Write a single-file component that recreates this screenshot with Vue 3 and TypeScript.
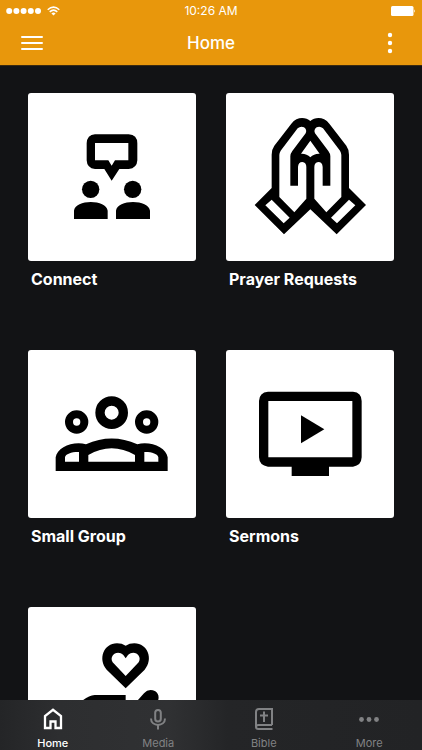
<script setup lang="ts">
import { ref } from 'vue'

type IconName = 'connect' | 'prayer' | 'group' | 'sermons' | 'give'
type TabName = 'Home' | 'Media' | 'Bible' | 'More'

interface Tile {
  icon: IconName
  label?: string
  viewBox: string
}

const tiles: Tile[] = [
  { icon: 'connect', label: 'Connect', viewBox: '-96 -81 504 504' },
  { icon: 'prayer', label: 'Prayer Requests', viewBox: '-42 -36 504 504' },
  { icon: 'group', label: 'Small Group', viewBox: '-36 -91 504 504' },
  { icon: 'sermons', label: 'Sermons', viewBox: '-60 -91 504 504' },
  { icon: 'give', viewBox: '-96 -69 504 504' },
]

const tabs: TabName[] = ['Home', 'Media', 'Bible', 'More']
const active = ref<TabName>('Home')
</script>

<template>
  <div class="screen">
    <header class="top">
      <div class="status">
        <div class="signal">
          <svg width="36" height="8" viewBox="0 0 36 8" fill="currentColor" aria-hidden="true">
            <circle v-for="n in 5" :key="n" :cx="n * 7.2 - 4" cy="4" r="3" />
          </svg>
          <svg width="13" height="10" viewBox="0 0 13 10" fill="none" stroke="currentColor" stroke-width="1.5" aria-hidden="true">
            <path d="M.7 3.7Q6.5-1.5 12.3 3.7M2.7 5.9Q6.5 2.4 10.3 5.9" />
            <path d="M6.5 9.5 4.4 7.4Q6.5 5.7 8.6 7.4Z" fill="currentColor" stroke="none" />
          </svg>
        </div>
        <span class="clock">10:26 AM</span>
        <svg class="battery" width="25" height="10" viewBox="0 0 25 10" fill="currentColor" aria-hidden="true">
          <rect width="22.5" height="10" rx="1.5" />
          <path d="M23.2 3.2Q25 5 23.2 6.8Z" />
        </svg>
      </div>
      <div class="nav">
        <button type="button" aria-label="Menu">
          <svg width="22" height="16" viewBox="0 0 22 16" stroke="currentColor" stroke-width="2" stroke-linecap="round" aria-hidden="true">
            <path d="M1 2H21M1 8H21M1 14H21" />
          </svg>
        </button>
        <h1>Home</h1>
        <button type="button" class="options" aria-label="Options">
          <svg width="6" height="22" viewBox="0 0 6 22" fill="currentColor" aria-hidden="true">
            <circle cx="3" cy="3" r="2.2" /><circle cx="3" cy="11" r="2.2" /><circle cx="3" cy="19" r="2.2" />
          </svg>
        </button>
      </div>
    </header>

    <main class="content">
      <a v-for="tile in tiles" :key="tile.icon" class="tile" href="#">
        <svg class="art" :viewBox="tile.viewBox" aria-hidden="true">
          <g v-if="tile.icon === 'connect'">
            <path fill-rule="evenodd" d="M105 43H206Q232 45 232 70V121Q231 145 206 147H178L155 182 133 147H105Q81 145 80 121V70Q81 45 105 43ZM105 69V121H145L155 137 165 121H205V69Z" />
            <circle cx="92" cy="208" r="26" />
            <circle cx="218" cy="208" r="26" />
            <path d="M42 297V272C45 237 140 237 143 272V297ZM168 297V272C171 237 267 237 270 272V297Z" />
          </g>
          <g v-else-if="tile.icon === 'prayer'">
            <path d="M211 48C197 36 171 34 154 56L103 122Q95 133 95 149V249L44 300 132 388 211 313 290 388 378 300 327 249V149Q327 133 319 122L268 56C251 34 225 36 211 48Z" />
            <g fill="#fff">
              <path d="M173 70Q182 62 192 67 202 74 197 85L157 138Q151 146 151 154V242H174V186Q175 171 187 171 199 172 199 186V281L163 322 118 276V150Q118 144 122 137Z" />
              <path d="M249 70Q240 62 230 67 220 74 225 85L265 138Q271 146 271 154V242H248V186Q247 171 235 171 223 172 223 186V281L259 322 304 276V150Q304 144 300 137Z" />
              <path d="M211 107 239 146Q222 145 211 157 200 145 183 146Z" />
              <path d="M95 284 76 301 131 355 149 338ZM327 284 346 301 291 355 273 338Z" />
            </g>
          </g>
          <g v-else-if="tile.icon === 'group'">
            <g fill="none" stroke="#000">
              <circle cx="215" cy="97" r="35" stroke-width="28" />
              <circle cx="110" cy="125" r="23" stroke-width="24" />
              <circle cx="320" cy="125" r="23" stroke-width="24" />
            </g>
            <path fill-rule="evenodd" d="M47 272V231C51 202 99 181 138 192Q215 157 292 192C331 181 379 202 383 231V272ZM75 244H117V215C98 214 76 220 75 231ZM145 244H285V224Q215 184 145 224ZM313 244H355V231C354 220 332 214 313 215Z" />
          </g>
          <g v-else-if="tile.icon === 'sermons'">
            <path fill-rule="evenodd" d="M66 34H321Q347 36 347 62V231Q346 256 321 259H249V287H137V259H66Q40 256 39 231V62Q40 36 66 34ZM67 62V231H319V62Z" />
            <path d="M165 105 235 147 165 189Z" />
          </g>
          <g v-else>
            <path fill-rule="evenodd" d="M197 175 140 119C113 88 131 40 171 40Q186 40 197 47 208 40 223 40C263 40 281 88 254 119ZM197 138 236 97C248 77 222 57 204 75L197 85 190 75C172 57 146 77 158 97Z" />
            <path d="M42 260V238Q75 197 104 195H197V222L214 232 252 190Q266 174 286 184 301 195 293 215L235 285H42Z" />
          </g>
        </svg>
        <span v-if="tile.label" class="caption">{{ tile.label }}</span>
      </a>
    </main>

    <nav class="tabs" aria-label="Sections">
      <button v-for="tab in tabs" :key="tab" type="button" :class="{ active: active === tab }" @click="active = tab">
        <svg width="24" height="24" viewBox="0 0 24 24" fill="none" stroke="currentColor" stroke-width="2" aria-hidden="true">
          <path v-if="tab === 'Home'" stroke-width="2.3" d="M4 21V9L12 2.8 20 9V21H14.5V14.5H9.5V21Z" />
          <template v-else-if="tab === 'Media'">
            <rect x="9.2" y="3" width="5.6" height="11.5" rx="2.8" />
            <path d="M5 11.5C5 20 19 20 19 11.5M12 18V22.5" />
          </template>
          <template v-else-if="tab === 'Bible'">
            <path d="M20 18H6.5Q4 18 4 20 4 22 6.5 22H20.5M4 20V5Q4 2 7 2H20V18" />
            <path d="M12 4.500V15M8 8.500H16" />
          </template>
          <g v-else fill="currentColor" stroke="none">
            <circle cx="4.5" cy="12.5" r="2.4" /><circle cx="12" cy="12.5" r="2.4" /><circle cx="19.5" cy="12.5" r="2.4" />
          </g>
        </svg>
        <span>{{ tab }}</span>
      </button>
    </nav>
  </div>
</template>

<style>
body {
  background: #121315;
}
</style>

<style scoped>
.screen {
  display: flex;
  flex-direction: column;
  height: 100vh;
  overflow: hidden;
  background: #121315;
  color: #fff;
  font-family: Inter, "Liberation Sans", sans-serif;
}

button {
  border: 0;
  padding: 0;
  background: none;
  color: inherit;
  font: inherit;
}

.top {
  flex: none;
  background: #e8970c;
  border-bottom: 1px solid #3a290f;
}

.status {
  display: grid;
  grid-template-columns: 1fr auto 1fr;
  align-items: center;
  height: 21px;
  padding: 0 6px;
}

.signal {
  display: flex;
  align-items: center;
  gap: 5px;
}

.clock {
  font-size: 12px;
  line-height: 20px;
}

.battery {
  justify-self: end;
}

.nav {
  display: grid;
  grid-template-columns: 1fr auto 1fr;
  align-items: center;
  height: 44px;
  padding: 0 29px 0 21px;
}

.nav button {
  display: flex;
}

.nav .options {
  justify-self: end;
}

h1 {
  margin: 0 0 0 8px;
  font-size: 17px;
  line-height: 24px;
  font-weight: 550;
}

.content {
  flex: 1;
  min-height: 0;
  overflow: hidden;
  display: grid;
  grid-template-columns: 1fr 1fr;
  align-content: start;
  gap: 59px 30px;
  padding: 27px 28px 0;
}

.tile {
  display: flex;
  flex-direction: column;
  gap: 6px;
  color: inherit;
  text-decoration: none;
}

.art {
  display: block;
  width: 100%;
  aspect-ratio: 1;
  border-radius: 3px;
  background: #fff;
}

.caption {
  padding: 0 3px;
  font-size: 16px;
  line-height: 24px;
  font-weight: 700;
}

.tabs {
  flex: none;
  display: grid;
  grid-template-columns: repeat(4, 1fr);
  height: 50px;
  background: linear-gradient(90deg, #242527 0%, #2d2e30 14%, #303133 40%, #242527 54%, #222325 100%);
}

.tabs button {
  display: flex;
  flex-direction: column;
  align-items: center;
  gap: 5px;
  padding-top: 7px;
  color: #818284;
  font-size: 11px;
  line-height: 14px;
}

.tabs .active {
  color: #fff;
  font-weight: 500;
}
</style>
